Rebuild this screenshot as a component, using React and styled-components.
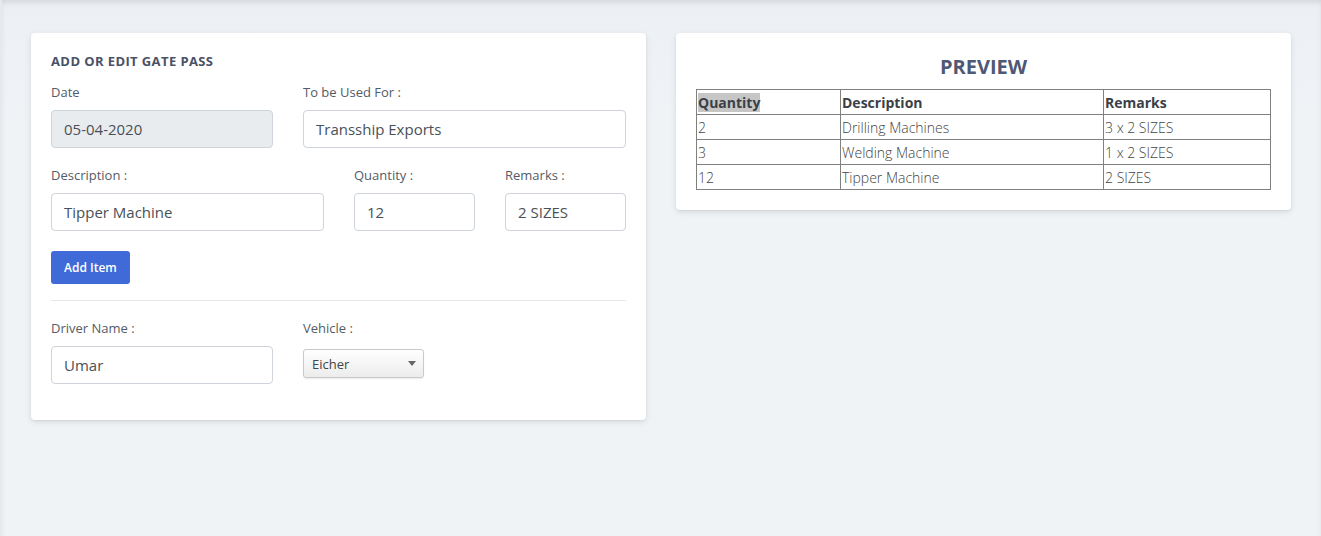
import React from "react";
import styled, { createGlobalStyle } from "styled-components";

const GlobalStyle = createGlobalStyle`
  html, body {
    margin: 0;
    padding: 0;
    background: #f0f3f6;
  }
  body {
    font-family: "Open Sans", "Liberation Sans", sans-serif;
    color: #495057;
  }
`;

const Page = styled.div`
  min-height: 536px;
  box-sizing: border-box;
  background: linear-gradient(#eceff4, #f0f3f6 120px);
  border-left: 2px solid #e6e9ed;
  box-shadow: inset 0 4px 6px -2px rgba(0, 0, 0, 0.12);
  padding: 33px 30px 30px 29px;
  display: grid;
  grid-template-columns: 615px 615px;
  gap: 30px;
  align-items: start;
`;

const Card = styled.div`
  background: #fff;
  border-radius: 4px;
  box-shadow: 0 2px 6px rgba(4, 9, 20, 0.1), 0 1px 2px rgba(4, 9, 20, 0.06);
  padding: 20px;
`;

const CardTitle = styled.h5`
  margin: 0 0 14px;
  font-size: 13px;
  font-weight: 700;
  color: #4a5166;
  text-transform: uppercase;
  line-height: 16px;
  letter-spacing: 0.4px;
`;

const Row = styled.div`
  display: grid;
  grid-template-columns: ${(p) => p.$cols};
  column-gap: 30px;
  margin-bottom: ${(p) => p.$mb || "0"};
`;

const Field = styled.div`
  display: flex;
  flex-direction: column;
  align-items: flex-start;
`;

const Label = styled.label`
  font-size: 13px;
  color: #545b66;
  line-height: 18px;
  margin-bottom: 9px;
`;

const Input = styled.input`
  width: 100%;
  box-sizing: border-box;
  height: 38px;
  border: 1px solid #ced4da;
  border-radius: 4px;
  padding: 0 12px;
  font-family: "Open Sans", "Liberation Sans", sans-serif;
  font-size: 15px;
  color: #495057;
  background: ${(p) => (p.readOnly ? "#e9ecef" : "#fff")};
  outline: none;
`;

const Button = styled.button`
  display: block;
  background: #3f6ad8;
  color: #fff;
  border: none;
  border-radius: 3px;
  height: 33px;
  padding: 0 13px;
  font-family: "Open Sans", "Liberation Sans", sans-serif;
  font-size: 12px;
  font-weight: 600;
  margin-top: 20px;
`;

const Divider = styled.hr`
  border: none;
  border-top: 1px solid #e5e8ec;
  margin: 16px 0 18px;
`;

const SelectBox = styled.div`
  margin-top: 3px;
  width: 121px;
  height: 29px;
  box-sizing: border-box;
  border: 1px solid #c9c9c9;
  border-radius: 3px;
  background: linear-gradient(#ffffff, #ececec);
  box-shadow: 0 1px 1px rgba(0, 0, 0, 0.08);
  display: flex;
  align-items: center;
  justify-content: space-between;
  padding: 0 7px 0 8px;
  font-size: 13px;
  color: #444;
`;

const Caret = styled.span`
  width: 0;
  height: 0;
  border-left: 4px solid transparent;
  border-right: 4px solid transparent;
  border-top: 5px solid #666;
`;

const PreviewTitle = styled.h3`
  margin: 2px 0 10px;
  text-align: center;
  font-size: 20px;
  font-weight: 700;
  color: #4f5874;
  line-height: 24px;
`;

const Table = styled.table`
  width: 100%;
  border-collapse: collapse;
  border: 1px solid #222;
  font-size: 14px;
  color: #444;
`;

const Th = styled.th`
  text-align: left;
  font-weight: 700;
  color: #3b3f47;
  border: 1px solid #808080;
  padding: 0 1px;
  height: 24px;
  width: ${(p) => p.$w || "auto"};
`;

const Td = styled.td`
  border: 1px solid #808080;
  padding: 0 1px;
  height: 24px;
  font-weight: 300;
`;

const Highlight = styled.span`
  background: #c6c6c6;
`;

const items = [
  { qty: "2", desc: "Drilling Machines", rem: "3 x 2 SIZES" },
  { qty: "3", desc: "Welding Machine", rem: "1 x 2 SIZES" },
  { qty: "12", desc: "Tipper Machine", rem: "2 SIZES" },
];

export default function App() {
  return (
    <>
      <GlobalStyle />
      <Page>
        <Card>
          <CardTitle>Add or edit gate pass</CardTitle>
          <Row $cols="222px 323px" $mb="18px">
            <Field>
              <Label>Date</Label>
              <Input readOnly value="05-04-2020" />
            </Field>
            <Field>
              <Label>To be Used For :</Label>
              <Input defaultValue="Transship Exports" />
            </Field>
          </Row>
          <Row $cols="273px 121px 121px">
            <Field>
              <Label>Description :</Label>
              <Input defaultValue="Tipper Machine" />
            </Field>
            <Field>
              <Label>Quantity :</Label>
              <Input defaultValue="12" />
            </Field>
            <Field>
              <Label>Remarks :</Label>
              <Input defaultValue="2 SIZES" />
            </Field>
          </Row>
          <Button>Add Item</Button>
          <Divider />
          <Row $cols="222px 323px" $mb="16px">
            <Field>
              <Label>Driver Name :</Label>
              <Input defaultValue="Umar" />
            </Field>
            <Field>
              <Label>Vehicle :</Label>
              <SelectBox>
                Eicher
                <Caret />
              </SelectBox>
            </Field>
          </Row>
        </Card>
        <Card>
          <PreviewTitle>PREVIEW</PreviewTitle>
          <Table>
            <thead>
              <tr>
                <Th $w="141px">
                  <Highlight>Quantity</Highlight>
                </Th>
                <Th $w="260px">Description</Th>
                <Th>Remarks</Th>
              </tr>
            </thead>
            <tbody>
              {items.map((it) => (
                <tr key={it.desc}>
                  <Td>{it.qty}</Td>
                  <Td>{it.desc}</Td>
                  <Td>{it.rem}</Td>
                </tr>
              ))}
            </tbody>
          </Table>
        </Card>
      </Page>
    </>
  );
}
